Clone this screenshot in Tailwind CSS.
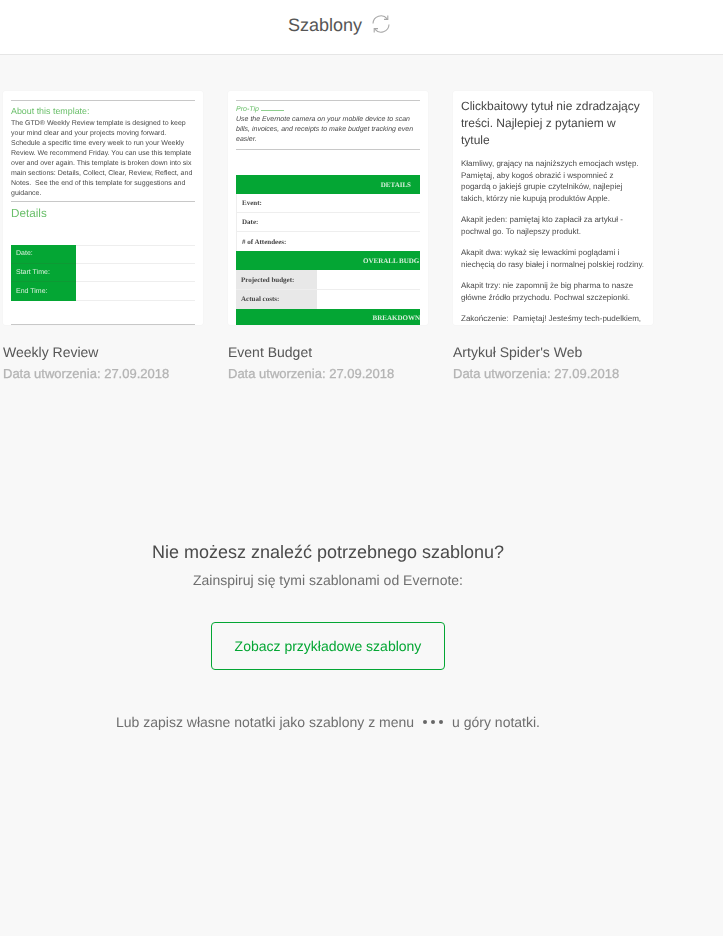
<!DOCTYPE html>
<html lang="pl">
<head>
  <meta charset="UTF-8" />
  <title>Szablony</title>
  <script src="https://cdn.jsdelivr.net/npm/@tailwindcss/browser@4"></script>
</head>
<body class="bg-[#f8f8f8] font-['Liberation_Sans',Arial,sans-serif] h-[936px] overflow-hidden [text-rendering:geometricPrecision]">
  <div class="opacity-[0.995]">
  <!-- header -->
  <header class="h-[55px] bg-white border-b border-[#e6e6e6] flex items-center pl-[288px] pb-[3px]">
    <span class="text-[18px] text-[#555]">Szablony</span>
    <svg class="ml-[9px] -mt-[3px] w-[20px] h-[20px] text-[#a8a8a8]" viewBox="0 0 20 20" fill="none" stroke="currentColor" stroke-width="1.1">
      <path d="M2 9.5A8 8 0 0 1 16.2 4.8" />
      <path d="M18 10.5A8 8 0 0 1 3.8 15.2" />
      <path d="M16.8 1.6V5.4H13" />
      <path d="M3.2 18.4V14.6H7" />
    </svg>
  </header>

  <!-- template cards -->
  <div class="flex gap-[25px] pl-[3px] pt-[36px]">
    <div class="w-[200px]">
      <div class="h-[234px] bg-white overflow-hidden rounded-[2px] px-[8px] pt-[9px] shadow-[0_0_2px_rgba(0,0,0,0.06)]">
        <div class="border-t border-[#c8c8c8]"></div>
        <p class="text-[#6abf6a] text-[8.9px] leading-[12px] mt-[4px]">About this template:</p>
        <p class="text-[#4a4a4a] text-[7px] leading-[10px] mt-[2px] whitespace-nowrap">The GTD® Weekly Review template is designed to keep<br>your mind clear and your projects moving forward.<br>Schedule a specific time every week to run your Weekly<br>Review. We recommend Friday. You can use this template<br>over and over again. This template is broken down into six<br>main sections: Details, Collect, Clear, Review, Reflect, and<br>Notes.&nbsp; See the end of this template for suggestions and<br>guidance.</p>
        <div class="border-t border-[#c8c8c8] mt-[2px]"></div>
        <p class="text-[#6abf6a] text-[11.7px] leading-[14px] mt-[5px]">Details</p>
        <div class="mt-[24px] text-[7px] text-[#d8f0dc]">
          <div class="flex h-[18.6px]"><div class="w-[65px] bg-[#03a633] border-b border-[#0c9a33] pl-[5px] pt-[1px] flex items-center">Date:</div><div class="flex-1 border-t border-b border-[#eee]"></div></div>
          <div class="flex h-[18.6px]"><div class="w-[65px] bg-[#03a633] border-b border-[#0c9a33] pl-[5px] pt-[1px] flex items-center">Start Time:</div><div class="flex-1 border-b border-[#eee]"></div></div>
          <div class="flex h-[18.6px]"><div class="w-[65px] bg-[#03a633] pl-[5px] pt-[1px] flex items-center">End Time:</div><div class="flex-1 border-b border-[#eee]"></div></div>
        </div>
        <div class="border-t border-[#c8c8c8] mt-[23px]"></div>
      </div>
      <p class="text-[14px] text-[#555] mt-[19px] leading-[16px]">Weekly Review</p>
      <p class="text-[13px] text-[#b4b4b4] [-webkit-text-stroke:0.3px_#b4b4b4] mt-[6px] leading-[16px]">Data utworzenia: 27.09.2018</p>
    </div>

    <div class="w-[200px]">
      <div class="h-[234px] bg-white overflow-hidden rounded-[2px] px-[8px] pt-[9px] shadow-[0_0_2px_rgba(0,0,0,0.06)]">
        <div class="border-t border-[#c8c8c8]"></div>
        <p class="flex items-center text-[#6abf6a] text-[7px] italic leading-[10px] mt-[4px]">Pro-Tip<span class="ml-[2px] w-[23px] border-t border-[#8fd08f]"></span></p>
        <p class="text-[#4a4a4a] text-[7px] italic leading-[10px] whitespace-nowrap">Use the Evernote camera on your mobile device to scan<br>bills, invoices, and receipts to make budget tracking even<br>easier.</p>
        <div class="border-t border-[#c8c8c8] mt-[4px]"></div>
        <div class="mt-[25px] font-['Liberation_Serif',serif] font-bold text-[7px] whitespace-nowrap overflow-hidden">
          <div class="h-[19.1px] pt-[1px] bg-[#03a633] text-[#d8f0dc] flex items-center justify-end pr-[9px]">DETAILS</div>
          <div class="h-[19.1px] pt-[1px] border-b border-[#eee] border-l text-[#444] flex items-center pl-[5px]">Event:</div>
          <div class="h-[19.1px] pt-[1px] border-b border-[#eee] border-l text-[#444] flex items-center pl-[5px]">Date:</div>
          <div class="h-[19.1px] pt-[1px] border-l border-[#eee] text-[#444] flex items-center pl-[5px]">
            # of Attendees:</div>
          <div class="h-[19.1px] pt-[1px] bg-[#03a633] text-[#d8f0dc] flex items-center pl-[127px]">OVERALL BUDG</div>
          <div class="h-[19.1px] border-b border-[#eee] flex"><div class="w-[81px] pt-[1px] bg-[#e8e8e8] text-[#444] flex items-center pl-[5px]">Projected budget:</div></div>
          <div class="h-[19.1px] flex"><div class="w-[81px] pt-[1px] bg-[#e8e8e8] text-[#444] flex items-center pl-[5px]">Actual costs:</div></div>
          <div class="h-[19.1px] pt-[1px] bg-[#03a633] text-[#d8f0dc] flex items-center justify-end">BREAKDOWN</div>
        </div>
      </div>
      <p class="text-[14px] text-[#555] mt-[19px] leading-[16px]">Event Budget</p>
      <p class="text-[13px] text-[#b4b4b4] [-webkit-text-stroke:0.3px_#b4b4b4] mt-[6px] leading-[16px]">Data utworzenia: 27.09.2018</p>
    </div>

    <div class="w-[200px]">
      <div class="h-[234px] bg-white overflow-hidden rounded-[2px] px-[8px] pt-[7px] shadow-[0_0_2px_rgba(0,0,0,0.06)] whitespace-nowrap">
        <p class="text-[#444] text-[12px] leading-[17px]">Clickbaitowy tytuł nie zdradzający<br>treści. Najlepiej z pytaniem w<br>tytule</p>
        <p class="text-[#4a4a4a] text-[8px] leading-[11.5px] mt-[9px]">Kłamliwy, grający na najniższych emocjach wstęp.<br>Pamiętaj, aby kogoś obrazić i wspomnieć z<br>pogardą o jakiejś grupie czytelników, najlepiej<br>takich, którzy nie kupują produktów Apple.</p>
        <p class="text-[#4a4a4a] text-[8px] leading-[11.5px] mt-[10px]">Akapit jeden: pamiętaj kto zapłacił za artykuł -<br>pochwal go. To najlepszy produkt.</p>
        <p class="text-[#4a4a4a] text-[8px] leading-[11.5px] mt-[10px]">Akapit dwa: wykaż się lewackimi poglądami i<br>niechęcią do rasy białej i normalnej polskiej rodziny.</p>
        <p class="text-[#4a4a4a] text-[8px] leading-[11.5px] mt-[10px]">Akapit trzy: nie zapomnij że big pharma to nasze<br>główne źródło przychodu. Pochwal szczepionki.</p>
        <p class="text-[#4a4a4a] text-[8px] leading-[11.5px] mt-[10px]">Zakończenie:&nbsp; Pamiętaj! Jesteśmy tech-pudelkiem,</p>
      </div>
      <p class="text-[14px] text-[#555] mt-[19px] leading-[16px]">Artykuł Spider's Web</p>
      <p class="text-[13px] text-[#b4b4b4] [-webkit-text-stroke:0.3px_#b4b4b4] mt-[6px] leading-[16px]">Data utworzenia: 27.09.2018</p>
    </div>
  </div>

  <!-- empty state -->
  <div class="w-[656px] flex flex-col items-center mt-[159px]">
    <h2 class="text-[18px] leading-[22px] text-[#4a4a4a]">Nie możesz znaleźć potrzebnego szablonu?</h2>
    <p class="text-[14px] leading-[18px] text-[#6e6e6e] mt-[8px]">Zainspiruj się tymi szablonami od Evernote:</p>
    <a class="mt-[33px] w-[234px] h-[48px] flex items-center justify-center border border-[#03a633] rounded-[4px] text-[14px] text-[#03a633]">Zobacz przykładowe szablony</a>
    <p class="mt-[43px] flex items-center text-[14px] leading-[18px] text-[#6e6e6e]">Lub zapisz własne notatki jako szablony z menu
      <span class="flex gap-[4px] mx-[9px]">
        <span class="w-[4px] h-[4px] rounded-full bg-[#666]"></span>
        <span class="w-[4px] h-[4px] rounded-full bg-[#666]"></span>
        <span class="w-[4px] h-[4px] rounded-full bg-[#666]"></span>
      </span>
      u góry notatki.</p>
  </div>
  </div>
</body>
</html>
